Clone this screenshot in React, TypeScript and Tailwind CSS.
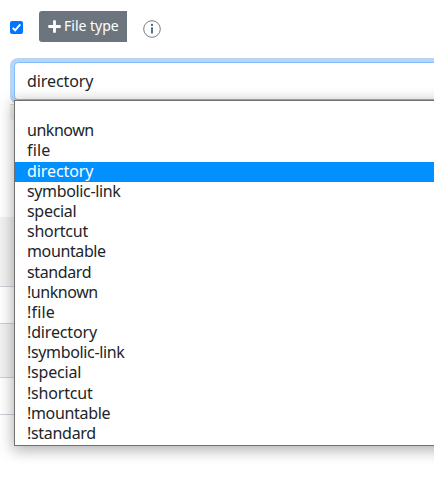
import React from "react";

const options = [
  { name: "", spacing: "" },
  { name: "unknown", spacing: "tracking-[-0.48px]" },
  { name: "file", spacing: "tracking-[0.2px]" },
  { name: "directory", spacing: "tracking-[-0.1px]" },
  { name: "symbolic-link", spacing: "tracking-[-0.35px]" },
  { name: "special", spacing: "tracking-[-0.3px]" },
  { name: "shortcut", spacing: "tracking-[-0.25px]" },
  { name: "mountable", spacing: "tracking-[-0.38px]" },
  { name: "standard", spacing: "tracking-[-0.38px]" },
  { name: "!unknown", spacing: "tracking-[-0.45px]" },
  { name: "!file", spacing: "tracking-[0.2px]" },
  { name: "!directory", spacing: "tracking-[-0.15px]" },
  { name: "!symbolic-link", spacing: "tracking-[-0.35px]" },
  { name: "!special", spacing: "tracking-[-0.2px]" },
  { name: "!shortcut", spacing: "tracking-[-0.18px]" },
  { name: "!mountable", spacing: "tracking-[-0.33px]" },
  { name: "!standard", spacing: "tracking-[-0.3px]" },
];

function Toolbar() {
  return (
    <div className="flex h-[62px] items-start pl-[10px] pt-[11px]">
      <span className="mt-[10px] flex size-[13px] items-center justify-center rounded-[2px] bg-[#0075ff]">
        <svg viewBox="0 0 13 13" className="size-[13px]" fill="none" stroke="white" strokeWidth="2">
          <path d="M2.7 6.9 5.1 9.3 10.3 3.3" />
        </svg>
      </span>
      <button className="ml-4 flex h-[31px] w-[88px] items-center whitespace-nowrap rounded-l-[3px] bg-[#6c757d] pb-px pl-[9px] text-[14px] text-white">
        <svg viewBox="0 0 12 12" className="mr-[3px] size-[13px] shrink-0" fill="white">
          <path d="M4.7.8Q4.7.2 5.3.2h1.4q.6 0 .6.6v3.9h3.9q.6 0 .6.6v1.4q0 .6-.6.6H7.3v3.9q0 .6-.6.6H5.3q-.6 0-.6-.6V7.3H.8q-.6 0-.6-.6V5.3q0-.6.6-.6h3.9z" />
        </svg>
        <span className="pb-[2px]">File type</span>
      </button>
      <svg viewBox="0 0 18 18" className="ml-4 mt-[9px] size-[18px]" fill="none">
        <circle cx="9" cy="9" r="8.3" stroke="#6d6d73" strokeWidth="0.9" />
        <circle cx="9" cy="4.9" r="1.1" fill="#2b6287" />
        <path d="M9 7.3v6.2" stroke="#2b6287" strokeWidth="1.7" />
      </svg>
    </div>
  );
}

function Menu() {
  return (
    <ul className="absolute left-[-1px] top-[37px] z-10 h-[346px] w-[460px] border border-[#717171] bg-white shadow-[0_3px_14px_1px_rgba(0,0,0,0.32)]">
      {options.map((o) => (
        <li
          key={o.name}
          className={`h-[20.2px] whitespace-nowrap pl-3 leading-[18px] ${o.spacing} ${
            o.name === "directory" ? "bg-[#0090ff] text-white" : ""
          }`}
        >
          {o.name}
        </li>
      ))}
    </ul>
  );
}

export default function App() {
  return (
    <main className="h-[504px] w-[434px] overflow-hidden bg-white font-['Noto_Sans',sans-serif] text-[16px] text-[#212529]">
      <Toolbar />
      <div className="relative ml-[14px] h-[38px] w-[460px] rounded-[4px] border border-[#80bdff] bg-white pl-3 leading-[36px] tracking-[-0.1px] shadow-[0_0_0_4px_#b8d5f5]">
        directory
        <Menu />
      </div>
      <div className="ml-[10px] mt-1 h-4 rounded-bl-[4px] border-t border-[#d5d5d5] bg-[#f2f2f2]" />
      <div className="mt-[97px]">
        <div className="h-[70px] border-b border-[#cbd1d8] bg-[#f2f2f2]" />
        <div className="h-[37px] border-b border-[#cbd1d8]" />
        <div className="h-[54px] border-b border-[#cbd1d8] bg-[#f2f2f2]" />
        <div className="h-[37px] border-b border-[#cbd1d8]" />
      </div>
    </main>
  );
}
